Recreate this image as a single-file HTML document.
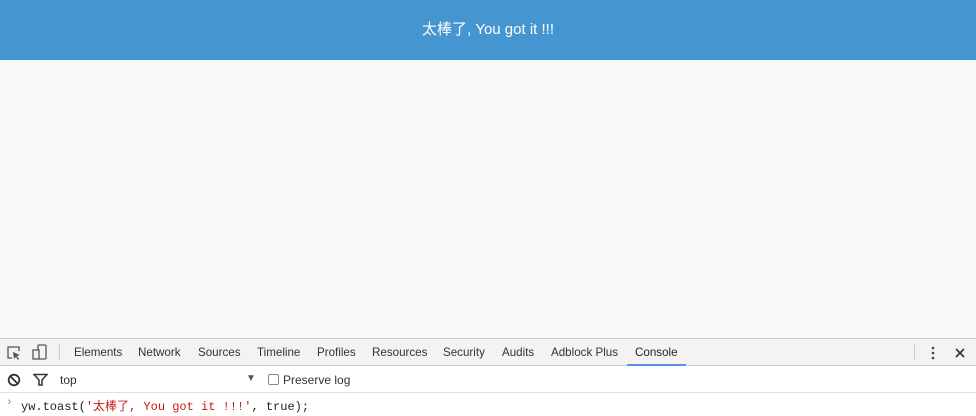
<!DOCTYPE html>
<html><head><meta charset="utf-8"><style>
*{margin:0;padding:0;box-sizing:border-box}
body{width:976px;height:416px;overflow:hidden;background:#f8f8f9;font-family:"Liberation Sans","Noto Sans CJK SC",sans-serif;position:relative}
.top{position:absolute;left:0;top:0;width:976px;height:60px;background:#4596d0;color:#fff;font-size:15px;text-align:center;line-height:60px}
.dt{position:absolute;left:0;top:338px;width:976px;height:78px;background:#fff;border-top:1px solid #ccc}
.tabs{position:absolute;top:0;left:0;width:976px;height:27px;background:#f3f3f3;border-bottom:1px solid #ccc;font-size:11.6px;color:#333}
.tabs span{position:absolute;top:7px}
.ul{position:absolute;left:627px;top:25px;width:59px;height:2px;background:#5b8fe8}
.filt{position:absolute;top:27px;left:0;width:976px;height:27px;border-bottom:1px solid #e0e0e0;font-size:12px;color:#333}
.con{position:absolute;top:55px;left:0;font-family:"Liberation Mono","Noto Sans CJK SC",monospace;font-size:12px;color:#222}
</style></head><body>
<div class="top">太棒了, You got it !!!</div>
<div class="dt">
<div class="tabs">
<svg style="position:absolute;left:6px;top:6px" width="16" height="16" viewBox="0 0 16 16"><path d="M6 13H2V2h11v4" fill="none" stroke="#555" stroke-width="1.3"/><path d="M7 7l7 3-3 1 2 3-1 1-2-3-2 2z" fill="#555"/></svg>
<svg style="position:absolute;left:32px;top:5px" width="16" height="17" viewBox="0 0 16 17"><rect x="6" y="1" width="8" height="14" rx="1" fill="none" stroke="#555" stroke-width="1.3"/><rect x="1" y="6" width="6" height="9" fill="#f3f3f3" stroke="#555" stroke-width="1.3"/></svg>
<div style="position:absolute;left:59px;top:5px;width:1px;height:16px;background:#ccc"></div>
<span style="left:74px">Elements</span><span style="left:138px">Network</span><span style="left:198px">Sources</span><span style="left:257px">Timeline</span><span style="left:317px">Profiles</span><span style="left:372px">Resources</span><span style="left:443px">Security</span><span style="left:502px">Audits</span><span style="left:551px">Adblock Plus</span><span style="left:635px;color:#222">Console</span>
<div class="ul"></div>
<div style="position:absolute;left:914px;top:5px;width:1px;height:16px;background:#ccc"></div>
<svg style="position:absolute;left:928px;top:6px" width="10" height="16"><circle cx="5" cy="3" r="1.3" fill="#444"/><circle cx="5" cy="8" r="1.3" fill="#444"/><circle cx="5" cy="13" r="1.3" fill="#444"/></svg>
<svg style="position:absolute;left:954px;top:8px" width="12" height="12"><path d="M2 2l8 8M10 2l-8 8" stroke="#333" stroke-width="1.6"/></svg>
</div>
<div class="filt">
<svg style="position:absolute;left:7px;top:7px" width="14" height="14"><circle cx="7" cy="7" r="5.3" fill="none" stroke="#333" stroke-width="1.8"/><path d="M3.3 3.3l7.4 7.4" stroke="#333" stroke-width="1.8"/></svg>
<svg style="position:absolute;left:33px;top:7px" width="15" height="14"><path d="M1 1.5h13L9 7v5H6V7z" fill="none" stroke="#333" stroke-width="1.5"/></svg>
<span style="position:absolute;left:60px;top:7px">top</span>
<span style="position:absolute;left:246px;top:7px;font-size:10px;color:#555">▼</span>
<div style="position:absolute;left:268px;top:8px;width:11px;height:11px;border:1px solid #888;border-radius:2px;background:#fff"></div>
<span style="position:absolute;left:283px;top:7px">Preserve log</span>
</div>
<div class="con"><span style="position:absolute;left:6px;top:3px;color:#888;font-size:11px">›</span><span style="position:absolute;left:21px;top:3px;white-space:nowrap">yw.toast(<span style="color:#c41a16">'太棒了, You got it !!!'</span>, true);</span></div>
</div>
</body></html>
